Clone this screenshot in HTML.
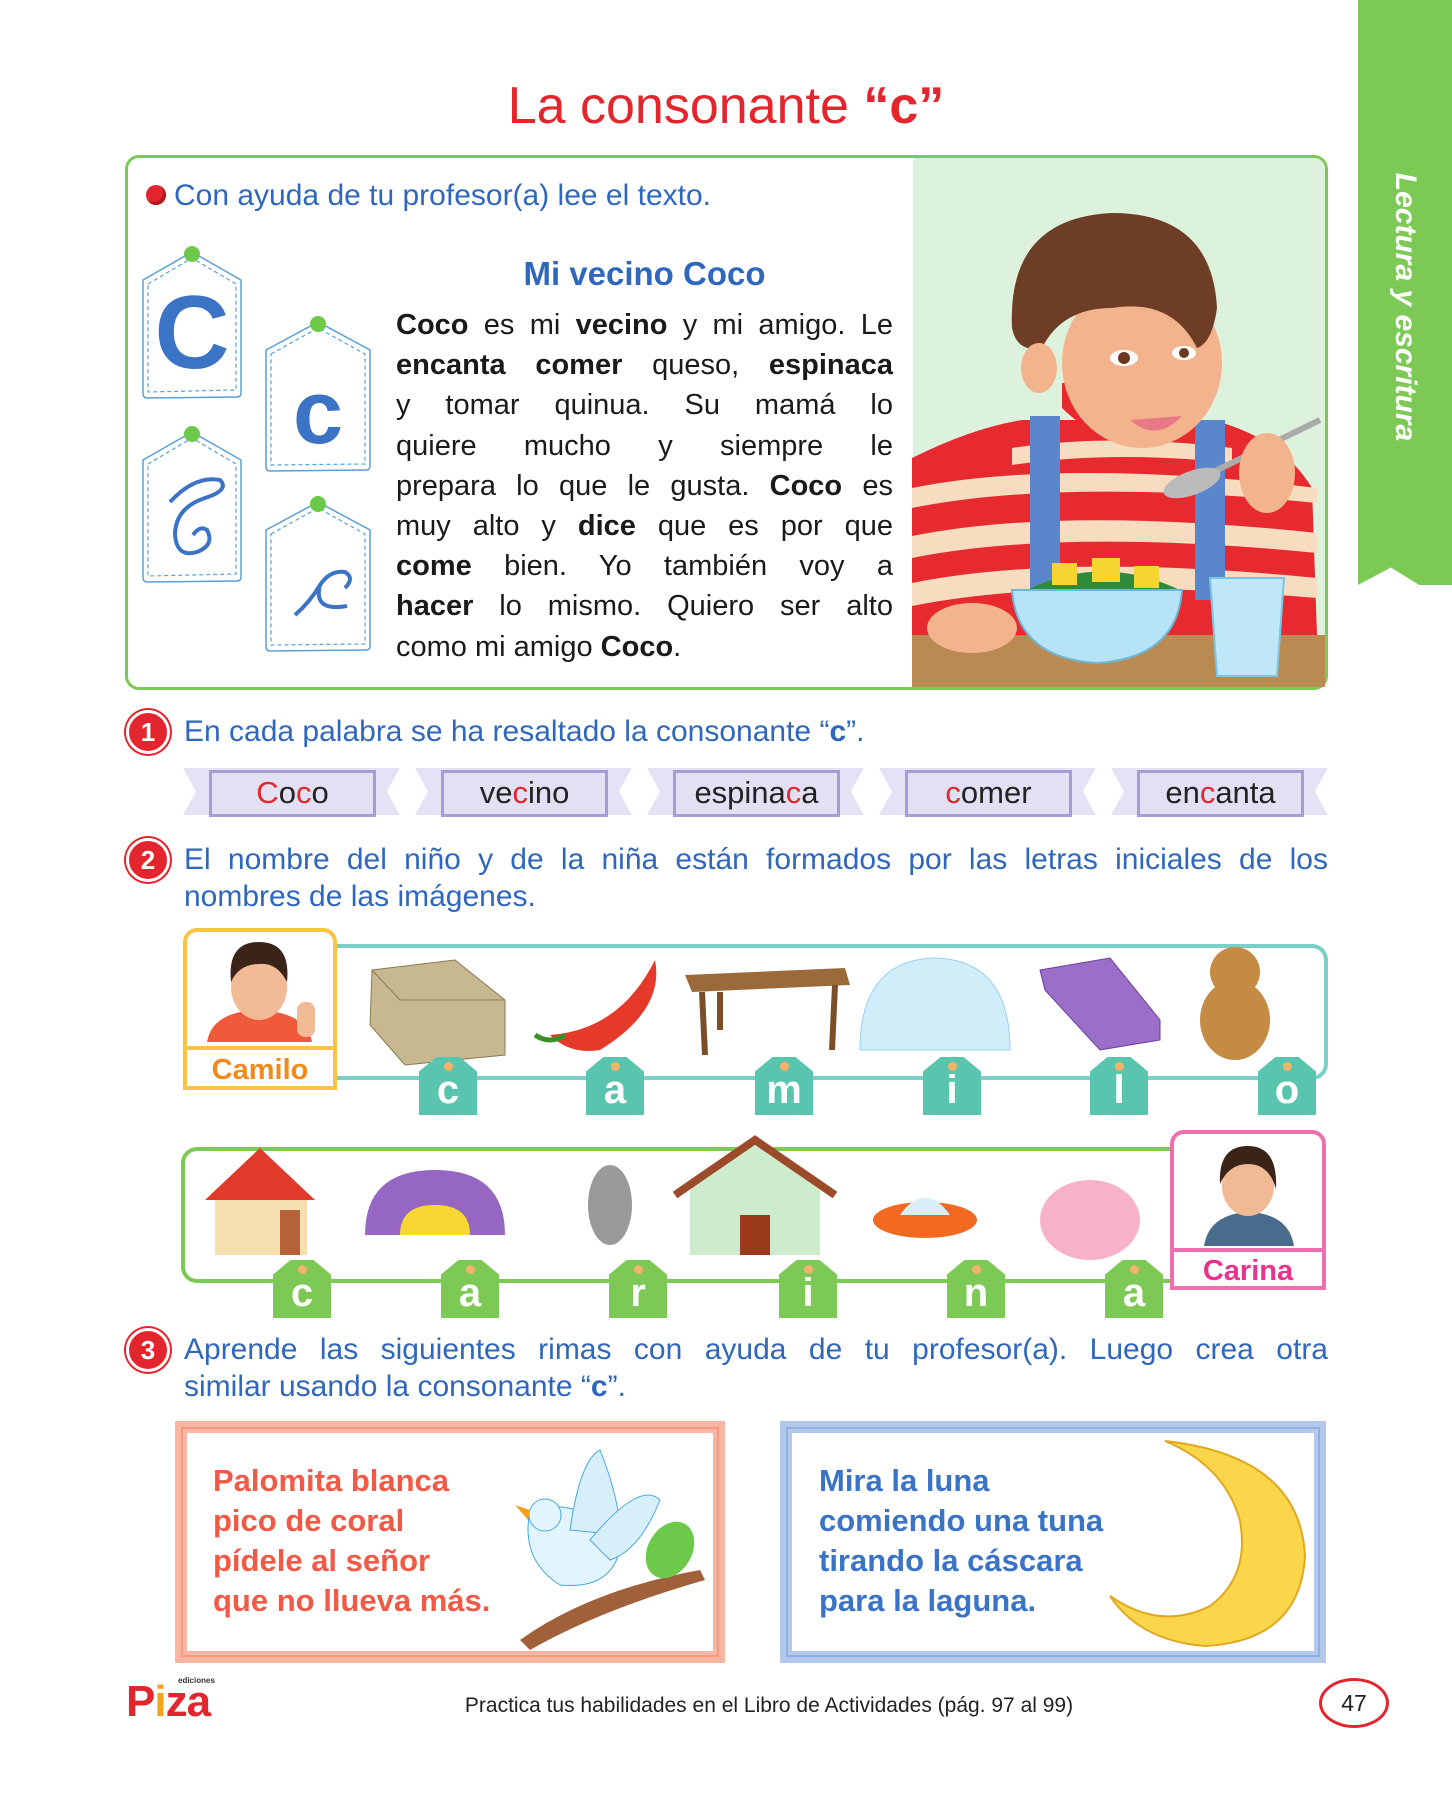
<!DOCTYPE html>
<html><head><meta charset="utf-8">
<style>
*{margin:0;padding:0;box-sizing:border-box}
body{width:1452px;height:1800px;background:#fff;position:relative;overflow:hidden;font-family:"Liberation Sans",sans-serif}
.a{position:absolute}
.blue{color:#2f67bd}
.title{left:0;width:1452px;text-align:center;top:76px;font-size:52px;color:#e3262d;letter-spacing:0px}
.tab{left:1358px;top:0;width:94px;height:585px;background:#7dc955;clip-path:polygon(0 0,100% 0,100% 100%,65% 100%,35% 97%,0 100%)}
.tabt{left:1358px;top:0;width:94px;height:585px}
.tabt span{position:absolute;left:47px;top:307px;transform:translate(-50%,-50%) rotate(90deg);white-space:nowrap;color:#fff;font-weight:bold;font-style:italic;font-size:30px}
.box{left:125px;top:155px;width:1203px;height:535px;border:3px solid #7dc955;border-radius:14px;overflow:hidden}
.para{left:396px;top:305px;width:497px;font-size:29px;line-height:40.2px;color:#1a1a1a}
.para div,.j div{text-align:justify;text-align-last:justify;white-space:nowrap}
.para div.l,.j div.l{text-align-last:left}
.num{width:44px;height:44px;border-radius:50%;background:#e3262d;border:3px solid #fff;box-shadow:0 0 0 2px #e3262d;color:#fff;font-weight:bold;font-size:26px;text-align:center;line-height:38px}
.q{font-size:30px;color:#2f67bd;line-height:37px}
.rib{top:768px;width:217px;height:47px;background:#e6e2f5;clip-path:polygon(0 0,100% 0,94% 50%,100% 100%,0 100%,6% 50%)}
.wb{top:770px;width:167px;height:47px;background:#e4e0f4;border:3px solid #a99bd6;text-align:center;font-size:31px;line-height:40px;color:#222}
.wb i{font-style:normal;color:#e3262d}
.lt{width:58px;height:58px;color:#fff;font-weight:bold;font-size:40px;text-align:center;line-height:66px;clip-path:polygon(0 25%,30% 0,70% 0,100% 25%,100% 100%,0 100%)}
.lt:after{content:"";position:absolute;left:25px;top:5px;width:9px;height:9px;border-radius:50%;background:#f6b26b}
.rh{font-weight:bold;font-size:31px;line-height:40px}
</style></head><body>

<div class="a title">La consonante <b>“c”</b></div>
<div class="a tab"></div>
<div class="a tabt"><span>Lectura y escritura</span></div>

<div class="a box">
 <div class="a" style="left:785px;top:0;width:420px;height:535px;background:#dcf2dc"></div>
</div>

<svg class="a" style="left:912px;top:158px" width="413" height="529" viewBox="0 0 413 529">
 <rect x="0" y="477" width="413" height="60" fill="#b98b52"/>
 <path d="M0 300 Q60 270 110 262 L300 262 Q370 280 400 330 L405 477 L0 477Z" fill="#e72a2f"/>
 <g fill="#f8dcc0">
  <path d="M0 330 Q150 300 405 330 L405 345 Q150 320 0 350Z"/>
  <path d="M0 378 Q150 348 405 375 L405 395 Q150 370 0 400Z"/>
  <path d="M0 425 Q150 395 405 420 L405 440 Q150 418 0 448Z"/>
  <path d="M100 290 Q200 275 320 290 L320 305 Q200 292 100 307Z"/>
 </g>
 <rect x="118" y="258" width="30" height="180" fill="#5a86cc"/>
 <rect x="283" y="262" width="30" height="180" fill="#5a86cc"/>
 <path d="M150 250 Q200 300 265 265 L270 225 L150 225Z" fill="#e72a2f"/>
 <ellipse cx="230" cy="205" rx="80" ry="85" fill="#f3b48d"/>
 <path d="M100 170 Q95 60 200 55 Q300 55 305 150 Q300 185 285 190 Q260 140 200 150 Q150 150 130 190 Q105 195 100 170Z" fill="#6e3d26"/>
 <ellipse cx="127" cy="210" rx="18" ry="25" fill="#f3b48d"/>
 <ellipse cx="212" cy="200" rx="14" ry="8" fill="#fff"/><circle cx="212" cy="200" r="6" fill="#6a3a20"/>
 <ellipse cx="272" cy="195" rx="12" ry="7" fill="#fff"/><circle cx="272" cy="195" r="5" fill="#6a3a20"/>
 <path d="M218 262 Q245 285 270 258 Z" fill="#e87a88"/>
 <path d="M293 318 L408 262" stroke="#aaa" stroke-width="6"/>
 <ellipse cx="280" cy="325" rx="30" ry="12" fill="#bbb" transform="rotate(-20 280 325)"/>
 <ellipse cx="355" cy="315" rx="28" ry="40" fill="#f3b48d"/>
 <path d="M115 432 Q190 395 268 432Z" fill="#2e8b3c"/>
 <rect x="140" y="405" width="25" height="22" fill="#f5d630"/><rect x="180" y="400" width="28" height="24" fill="#f5d630"/><rect x="222" y="408" width="25" height="22" fill="#f5d630"/>
 <path d="M100 432 L270 432 Q265 500 185 505 Q105 500 100 432Z" fill="#b6e3f6" stroke="#6db8d8" stroke-width="2"/>
 <path d="M298 420 L372 420 L365 518 L305 518Z" fill="#bfe7f8" stroke="#7cc4e4" stroke-width="2"/>
 <ellipse cx="60" cy="470" rx="45" ry="25" fill="#f3b48d"/>
</svg>

<div class="a" style="left:146px;top:185px;width:20px;height:20px;border-radius:50%;background:#e3262d;box-shadow:inset -3px -3px 0 #b01a20"></div>
<div class="a blue" style="left:174px;top:179px;font-size:30px">Con ayuda de tu profesor(a) lee el texto.</div>
<div class="a blue" style="left:396px;width:497px;text-align:center;top:255px;font-size:33px;font-weight:bold">Mi vecino Coco</div>
<div class="a para">
<div><b>Coco</b> es mi <b>vecino</b> y mi amigo. Le</div>
<div><b>encanta comer</b> queso, <b>espinaca</b></div>
<div>y tomar quinua. Su mamá lo</div>
<div>quiere mucho y siempre le</div>
<div>prepara lo que le gusta. <b>Coco</b> es</div>
<div>muy alto y <b>dice</b> que es por que</div>
<div><b>come</b> bien. Yo también voy a</div>
<div><b>hacer</b> lo mismo. Quiero ser alto</div>
<div class="l">como mi amigo <b>Coco</b>.</div>
</div>

<svg class="a" style="left:135px;top:240px" width="240" height="420" viewBox="0 0 240 420">
 <g fill="#fff" stroke="#5a9fd6" stroke-width="1.5">
  <path d="M8 40 L57 12 L106 40 L106 153 Q106 157 102 157 L12 158 Q8 158 8 153Z"/>
  <path d="M131 110 L183 82 L235 110 L235 226 Q235 230 231 230 L135 231 Q131 231 131 226Z"/>
  <path d="M8 220 L57 192 L106 220 L106 337 Q106 341 102 341 L12 342 Q8 342 8 337Z"/>
  <path d="M131 290 L183 262 L235 290 L235 406 Q235 410 231 410 L135 411 Q131 411 131 406Z"/>
 </g>
 <g fill="none" stroke="#5a9fd6" stroke-width="1.2" stroke-dasharray="4 3">
  <path d="M13 44 L57 18 L101 44 L101 150 L13 152Z"/>
  <path d="M136 114 L183 88 L230 114 L230 224 L136 225Z"/>
  <path d="M13 224 L57 198 L101 224 L101 334 L13 336Z"/>
  <path d="M136 294 L183 268 L230 294 L230 404 L136 405Z"/>
 </g>
 <g fill="#6cc94a"><circle cx="57" cy="14" r="8"/><circle cx="183" cy="84" r="8"/><circle cx="57" cy="194" r="8"/><circle cx="183" cy="264" r="8"/></g>
 <text x="57" y="128" text-anchor="middle" font-family="Liberation Sans" font-weight="bold" font-size="104" fill="#3b73c5">C</text>
 <text x="183" y="203" text-anchor="middle" font-family="Liberation Sans" font-weight="bold" font-size="90" fill="#3b73c5">c</text>
 <path d="M35 262 Q60 235 85 240 Q95 250 70 258 Q40 268 40 295 Q42 318 62 312 Q80 305 72 290 Q65 285 58 295" fill="none" stroke="#3b73c5" stroke-width="4"/>
 <path d="M160 375 Q175 362 185 345 Q195 330 210 332 Q220 338 210 348 M185 345 Q178 372 212 366" fill="none" stroke="#3b73c5" stroke-width="4"/>
</svg>

<div class="a num" style="left:126px;top:710px">1</div>
<div class="a q" style="left:184px;top:713px">En cada palabra se ha resaltado la consonante “<b>c</b>”.</div>
<div class="a rib" style="left:183px"></div><div class="a wb" style="left:209px"><i>C</i>o<i>c</i>o</div>
<div class="a rib" style="left:415px"></div><div class="a wb" style="left:441px">ve<i>c</i>ino</div>
<div class="a rib" style="left:647px"></div><div class="a wb" style="left:673px">espina<i>c</i>a</div>
<div class="a rib" style="left:879px"></div><div class="a wb" style="left:905px"><i>c</i>omer</div>
<div class="a rib" style="left:1111px"></div><div class="a wb" style="left:1137px">en<i>c</i>anta</div>

<div class="a num" style="left:126px;top:838px">2</div>
<div class="a q j" style="left:184px;top:841px;width:1144px"><div>El nombre del niño y de la niña están formados por las letras iniciales de los</div><div class="l">nombres de las imágenes.</div></div>

<div class="a" style="left:320px;top:944px;width:1008px;height:136px;border:4px solid #7acfc6;border-left:none;border-radius:0 16px 16px 0"></div>
<div class="a" style="left:183px;top:928px;width:154px;height:162px;border:4px solid #f9c443;border-radius:14px 14px 0 0;background:#fff"></div>
<svg class="a" style="left:187px;top:932px" width="146" height="110" viewBox="0 0 146 110">
 <path d="M20 110 Q25 80 70 78 Q120 80 125 110Z" fill="#ee5a3a"/>
 <ellipse cx="72" cy="55" rx="28" ry="33" fill="#f2b995"/>
 <path d="M44 50 Q40 10 72 10 Q104 10 100 50 Q90 30 72 32 Q52 32 44 50Z" fill="#3a2418"/>
 <rect x="110" y="70" width="18" height="35" rx="8" fill="#f2b995"/>
</svg>
<div class="a" style="left:187px;top:1046px;width:146px;height:40px;background:#fff;border-top:4px solid #f9c443;color:#f28a1a;font-weight:bold;font-size:29px;text-align:center;line-height:40px">Camilo</div>

<svg class="a" style="left:340px;top:940px" width="990" height="130" viewBox="0 0 990 130">
 <path d="M32 30 L115 20 L165 60 L165 115 L65 125 L30 85Z" fill="#c7b890" stroke="#8b7a55"/><path d="M32 30 L60 60 L165 60" fill="none" stroke="#8b7a55"/>
 <path d="M210 95 Q280 90 315 20 Q325 70 260 110 Q230 115 210 95Z" fill="#e53a2a"/><path d="M195 95 Q210 105 225 95" stroke="#3d8f2a" stroke-width="5" fill="none"/>
 <path d="M345 35 L505 28 L510 45 L352 52Z" fill="#9b6a3a"/><path d="M362 52 L365 115 M495 45 L492 110 M380 52 L380 90" stroke="#7a4e28" stroke-width="6"/>
 <path d="M520 110 Q520 20 595 18 Q670 20 670 110Z" fill="#cfeefa" stroke="#9bd2ea"/>
 <path d="M700 30 L770 18 L820 80 L820 100 L760 110 L705 50Z" fill="#9b6fc8" stroke="#6a3e9e"/>
 <ellipse cx="895" cy="80" rx="35" ry="40" fill="#c58a44"/><circle cx="895" cy="32" r="25" fill="#c58a44"/>
</svg>
<div class="a lt" style="left:419px;top:1057px;background:#5ac5ae">c</div>
<div class="a lt" style="left:586px;top:1057px;background:#5ac5ae">a</div>
<div class="a lt" style="left:755px;top:1057px;background:#5ac5ae">m</div>
<div class="a lt" style="left:923px;top:1057px;background:#5ac5ae">i</div>
<div class="a lt" style="left:1090px;top:1057px;background:#5ac5ae">l</div>
<div class="a lt" style="left:1258px;top:1057px;background:#5ac5ae">o</div>

<div class="a" style="left:181px;top:1147px;width:1000px;height:136px;border:4px solid #7dc955;border-right:none;border-radius:16px 0 0 16px"></div>
<svg class="a" style="left:195px;top:1130px" width="990" height="135" viewBox="0 0 990 135">
 <path d="M10 70 L65 18 L120 70Z" fill="#e03a2a"/><rect x="20" y="70" width="92" height="55" fill="#f6dfb0"/><rect x="85" y="80" width="20" height="45" fill="#b5623a"/>
 <path d="M170 105 Q170 40 240 40 Q310 40 310 105Z" fill="#9567c2"/><path d="M205 105 Q205 75 240 75 Q275 75 275 105Z" fill="#f7d832"/>
 <ellipse cx="415" cy="75" rx="22" ry="40" fill="#9a9a9a"/>
 <path d="M495 60 L560 10 L625 60 L625 125 L495 125Z" fill="#cdeccd"/><path d="M480 65 L560 10 L640 65" fill="none" stroke="#9b4a2a" stroke-width="8"/><rect x="545" y="85" width="30" height="40" fill="#9b3a1a"/>
 <ellipse cx="730" cy="90" rx="52" ry="18" fill="#f26a22"/><path d="M705 85 Q730 50 755 85" fill="#d8eef8"/>
 <ellipse cx="895" cy="90" rx="50" ry="40" fill="#f7b2c8"/>
</svg>
<div class="a" style="left:1170px;top:1130px;width:156px;height:160px;border:4px solid #ee6fae;border-radius:14px 14px 0 0;background:#fff"></div>
<svg class="a" style="left:1174px;top:1134px" width="148" height="112" viewBox="0 0 148 112">
 <path d="M30 112 Q35 80 75 78 Q115 80 120 112Z" fill="#4a6c8c"/>
 <ellipse cx="74" cy="52" rx="26" ry="30" fill="#f2b995"/>
 <path d="M46 50 Q44 12 74 12 Q104 12 102 55 Q95 30 74 30 Q55 30 46 50Z" fill="#3a2418"/>
</svg>
<div class="a" style="left:1174px;top:1248px;width:148px;height:38px;background:#fff;border-top:4px solid #ee6fae;color:#e8348c;font-weight:bold;font-size:29px;text-align:center;line-height:38px">Carina</div>
<div class="a lt" style="left:273px;top:1260px;background:#7dc955">c</div>
<div class="a lt" style="left:441px;top:1260px;background:#7dc955">a</div>
<div class="a lt" style="left:609px;top:1260px;background:#7dc955">r</div>
<div class="a lt" style="left:779px;top:1260px;background:#7dc955">i</div>
<div class="a lt" style="left:947px;top:1260px;background:#7dc955">n</div>
<div class="a lt" style="left:1105px;top:1260px;background:#7dc955">a</div>

<div class="a num" style="left:126px;top:1328px">3</div>
<div class="a q j" style="left:184px;top:1331px;width:1144px"><div>Aprende las siguientes rimas con ayuda de tu profesor(a). Luego crea otra</div><div class="l">similar usando la consonante “<b>c</b>”.</div></div>

<div class="a" style="left:175px;top:1421px;width:550px;height:242px;border:12px solid #f8b6a2;outline:2px solid #f39a80;outline-offset:-8px"></div>
<div class="a rh" style="left:213px;top:1461px;color:#f05a46">Palomita blanca<br>pico de coral<br>pídele al señor<br>que no llueva más.</div>
<svg class="a" style="left:470px;top:1440px" width="240" height="210" viewBox="0 0 240 210">
 <path d="M50 200 Q120 150 230 130 L235 140 Q130 170 60 210Z" fill="#a0603a"/>
 <ellipse cx="200" cy="110" rx="22" ry="30" fill="#6cc94a" transform="rotate(30 200 110)"/>
 <path d="M60 70 Q120 55 150 110 Q140 150 90 145 Q50 120 60 70Z" fill="#e2f4fc" stroke="#4aa8de"/>
 <path d="M100 90 Q110 20 130 10 Q150 60 150 95Z" fill="#d7effb" stroke="#4aa8de"/>
 <path d="M120 100 Q170 40 190 60 Q170 110 140 120Z" fill="#d7effb" stroke="#4aa8de"/>
 <circle cx="75" cy="75" r="16" fill="#e2f4fc" stroke="#4aa8de"/><path d="M60 70 L45 65 L58 80Z" fill="#f5a020"/>
</svg>

<div class="a" style="left:780px;top:1421px;width:546px;height:242px;border:12px solid #b3c8ea;outline:2px solid #8fb0e0;outline-offset:-8px"></div>
<div class="a rh" style="left:819px;top:1461px;color:#3b73c5">Mira la luna<br>comiendo una tuna<br>tirando la cáscara<br>para la laguna.</div>
<svg class="a" style="left:1100px;top:1436px" width="215" height="215" viewBox="0 0 215 215">
 <path d="M65 5 Q200 20 205 120 Q200 205 105 210 Q40 205 10 160 Q60 195 110 170 Q150 140 140 85 Q125 30 65 5Z" fill="#fbd54a" stroke="#e0a820" stroke-width="2"/>
</svg>

<div class="a" style="left:126px;top:1680px;font-weight:bold;font-size:44px;color:#e3262d;letter-spacing:-1px;line-height:44px">P<span style="color:#f2a51a">i</span>za</div>
<div class="a" style="left:178px;top:1676px;font-size:8px;font-weight:bold;color:#333">ediciones</div>
<div class="a" style="left:0;width:1538px;text-align:center;top:1694px;font-size:21px;color:#222">Practica tus habilidades en el Libro de Actividades (pág. 97 al 99)</div>
<div class="a" style="left:1319px;top:1678px;width:70px;height:50px;border:3px solid #e3262d;border-radius:50%;text-align:center;line-height:44px;font-size:23px;color:#222">47</div>
</body></html>
